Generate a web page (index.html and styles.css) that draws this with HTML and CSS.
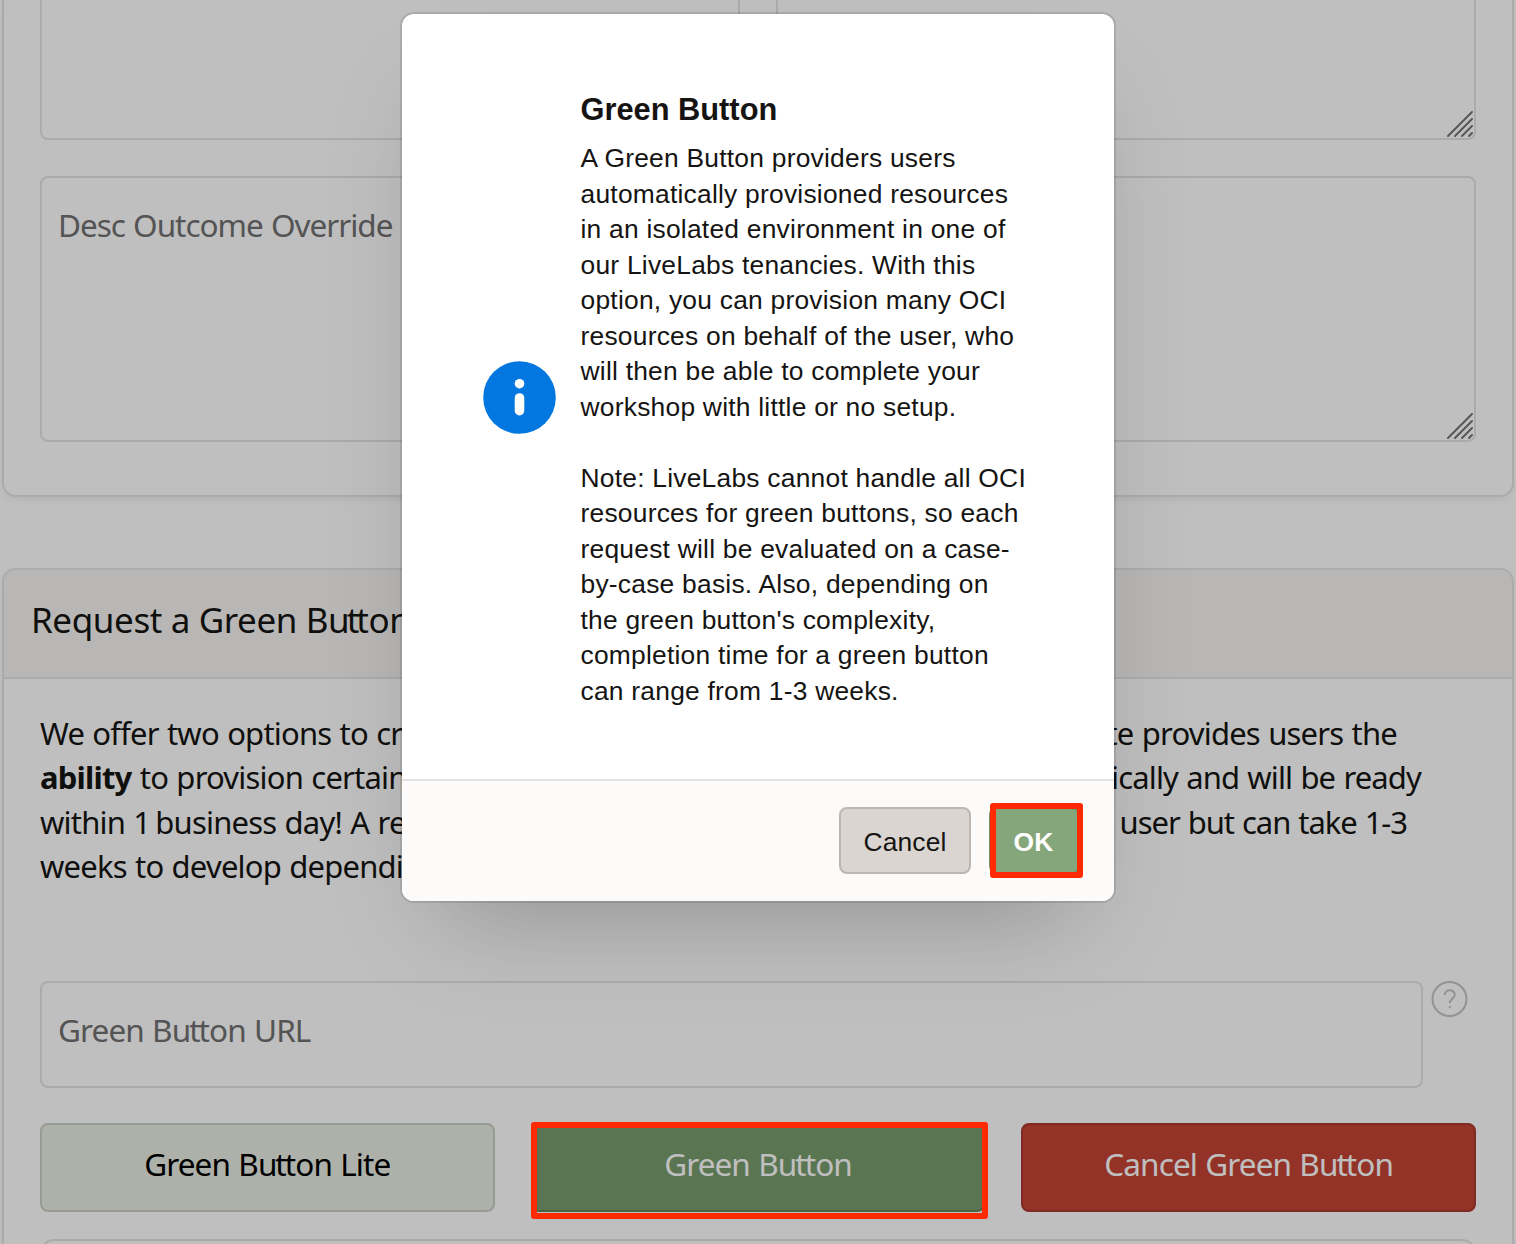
FILE: index.html
```html
<!DOCTYPE html>
<html lang="en">
<head>
<meta charset="utf-8">
<title>Green Button</title>
<link rel="stylesheet" href="styles.css">
</head>
<body>
<main class="page">
  <section class="card card-top">
    <div class="field-row">
      <div class="area area-short"></div>
      <div class="area area-short"><svg class="grip" viewBox="0 0 26 26"><path d="M1 25L25 1M8 25L25 8M15 25L25 15M22 25L25 22"/></svg></div>
    </div>
    <div class="area area-tall"><span class="label label-desc">Desc Outcome Override</span><svg class="grip" viewBox="0 0 26 26"><path d="M1 25L25 1M8 25L25 8M15 25L25 15M22 25L25 22"/></svg></div>
  </section>
  <section class="card card-request">
    <h2 class="card-title">Request a Green B<span class="tight">ut</span>ton</h2>
    <div class="card-body">
      <div class="intro">
        <div class="line line-1"><span>We offer two options to create</span><span>Lite provides users the</span></div>
        <div class="line line-2"><span><b>ability</b> to provision certain</span><span class="narrow">automatically and will be ready</span></div>
        <div class="line line-3"><span>within 1<span class="thin"> </span>business day! A regular</span><span class="narrower">user but can take 1-3</span></div>
        <div class="line line-4"><span>weeks to develop depending</span></div>
      </div>
      <div class="url-row">
        <div class="url-field"><span class="label label-url">Green B<span class="tight">ut</span>ton URL</span></div>
        <svg class="help" viewBox="0 0 38 38"><circle cx="18.5" cy="19" r="17"/><path d="M13.8 15C13.8 8.7 23.7 8.7 23.7 14.8C23.7 18.8 18.8 18.8 18.8 23.3"/><path d="M18.8 25.9V28.2"/></svg>
      </div>
      <div class="actions">
        <button class="btn btn-lite">Green B<span class="tight">ut</span>ton Lite</button>
        <button class="btn btn-green">Green B<span class="tight">ut</span>ton</button>
        <button class="btn btn-red">Cancel Green B<span class="tight">ut</span>ton</button>
      </div>
      <div class="region"></div>
    </div>
  </section>
</main>
<div class="overlay">
  <div class="dialog">
    <div class="dialog-body">
      <svg class="info" viewBox="0 0 73 73"><circle class="disc" cx="36.5" cy="36.5" r="36.3"/><circle cx="36.5" cy="22.7" r="4.8"/><rect x="31.7" y="32.2" width="9.6" height="22.3" rx="4.8"/></svg>
      <div class="message">
        <h3 class="message-title">Green Button</h3>
        <p class="copy">A Green Button providers users<br>automatically provisioned resources<br>in an isolated environment in one of<br>our LiveLabs tenancies. With this<br>option, you can provision many OCI<br>resources on behalf of the user, who<br>will then be able to complete your<br>workshop with little or no setup.</p>
        <p class="copy">Note: LiveLabs cannot handle all OCI<br>resources for green buttons, so each<br>request will be evaluated on a case-<br>by-case basis. Also, depending on<br>the green button's complexity,<br>completion time for a green button<br>can range from 1-3 weeks.</p>
      </div>
    </div>
    <div class="dialog-footer">
      <button class="dlg-btn cancel">Cancel</button>
      <button class="dlg-btn ok">OK</button>
    </div>
  </div>
</div>
<div class="mark mark-green"></div>
<div class="mark mark-ok"></div>
</body>
</html>
```

FILE: styles.css
```css
* { box-sizing: border-box; }
body { margin: 0; height: 1244px; overflow: hidden; position: relative; background: #fff; color: #151412; font-family: "Noto Sans", "Open Sans", sans-serif; }
.page { height: 1244px; overflow: hidden; padding: 0 2px; display: flex; flex-direction: column; gap: 71px; }
.card { border: 2px solid #e5e5e5; border-radius: 14px; box-shadow: 0 4px 8px -2px rgba(0,0,0,.07); flex: none; background: #fff; }
.card-top { height: 497px; border-top: 0; border-radius: 0 0 14px 14px; padding: 0 36px; }
.field-row { display: grid; grid-template-columns: 1fr 1fr; gap: 36px; margin-bottom: 36px; }
.area { border: 2px solid #e5e5e5; border-radius: 8px; position: relative; }
.area-short { height: 140px; border-top: 0; border-radius: 0 0 8px 8px; }
.area-tall { height: 266px; padding: 24px 16px; }
.grip { position: absolute; right: 1px; bottom: 1px; width: 26px; height: 26px; fill: none; stroke: #737373; stroke-width: 1.9; stroke-linecap: round; }
.label { color: #717171; font-size: 31.5px; line-height: 46px; white-space: nowrap; display: inline-block; letter-spacing: -1.02px; word-spacing: 1px; }
.label-url { letter-spacing: -.9px; }
.tight { letter-spacing: -2px; }
.card-request { height: 720px; }
.card-title { margin: 0; height: 109px; border-bottom: 2px solid #e5e5e5; background: #f6f4f2; border-radius: 12px 12px 0 0; padding: 23px 27px; font-size: 35px; line-height: 54px; font-weight: 400; white-space: nowrap; letter-spacing: -.4px; }
.card-title .tight { letter-spacing: -3px; }
.card-body { padding: 32px 36px 0; }
.intro { font-size: 31px; line-height: 44.4px; height: 270px; white-space: nowrap; letter-spacing: -.8px; word-spacing: 1px; }
.line { display: flex; justify-content: space-between; }
.line-1 { width: 1357px; }
.line-2 { width: 1381px; }
.line-3 { width: 1367px; }
.thin { letter-spacing: -4px; }
.narrow { letter-spacing: -.87px; }
.narrower { letter-spacing: -1.05px; }
.url-row { display: flex; gap: 8px; }
.url-field { width: 1383px; height: 107px; border: 2px solid #e5e5e5; border-radius: 8px; padding: 24px 16px; }
.help { width: 38px; height: 38px; fill: none; stroke: #c5c5c5; stroke-width: 2; margin-top: -1px; }
.actions { display: grid; grid-template-columns: repeat(3, 1fr); gap: 36px; margin: 35px 0 27px; }
.btn { height: 89px; border: 2px solid; border-radius: 8px; font: 31.5px/42px "Noto Sans", sans-serif; letter-spacing: -.9px; word-spacing: 1px; padding: 0 0 7px; white-space: nowrap; }
.btn-lite { background: #e7ece2; border-color: #c9d0c6; color: #000; }
.btn-green { background: #789c6c; border-color: #65845a; color: #fff; }
.btn-red { background: #c54335; border-color: #ab382f; color: #fff; }
.region { height: 40px; border: 2px solid #e5e5e5; border-radius: 14px; }
.overlay { position: absolute; inset: 0; background: rgba(0,0,0,.25); padding-top: 14px; }
.dialog { width: 712px; height: 887px; margin: 0 auto; border-radius: 12px; background: #fff; overflow: hidden; box-shadow: 0 0 0 2px rgba(0,0,0,.1), 0 50px 100px -40px rgba(0,0,0,.25); font-family: "Liberation Sans", Arial, sans-serif; display: flex; flex-direction: column; }
.dialog-body { height: 765px; display: flex; align-items: center; padding: 6px 80px 0 80.5px; gap: 25px; }
.info { width: 73px; height: 73px; fill: #fff; flex: none; margin-top: -5px; }
.disc { fill: #0277df; }
.message { white-space: nowrap; }
.message-title { margin: 0 0 11px; font-size: 30.8px; line-height: 40px; }
.copy { margin: 0 0 35.5px; font-size: 26.4px; line-height: 35.5px; letter-spacing: .23px; }
.copy:last-child { margin: 0; }
.dialog-footer { flex: 1; border-top: 2px solid #e2e2e2; background: #fcfbfa; display: flex; justify-content: flex-end; gap: 18px; padding: 26px 34px 0; }
.dlg-btn { height: 67px; border: 2px solid #bdb7b3; border-radius: 8px; background: #dad5d0; color: #151412; font: 26.4px/32px "Liberation Sans", Arial, sans-serif; letter-spacing: .15px; padding: 2px 0 0; }
.cancel { width: 132px; }
.ok { width: 91px; background: #85a67b; border-color: #6f9166; color: #fff; font-weight: 700; padding-right: 2px; }
.mark { position: absolute; border: 6px solid #ff2a00; border-radius: 3px; }
.mark-green { left: 531px; top: 1122px; width: 457px; height: 97px; }
.mark-ok { left: 990px; top: 803px; width: 93px; height: 75px; }
```
